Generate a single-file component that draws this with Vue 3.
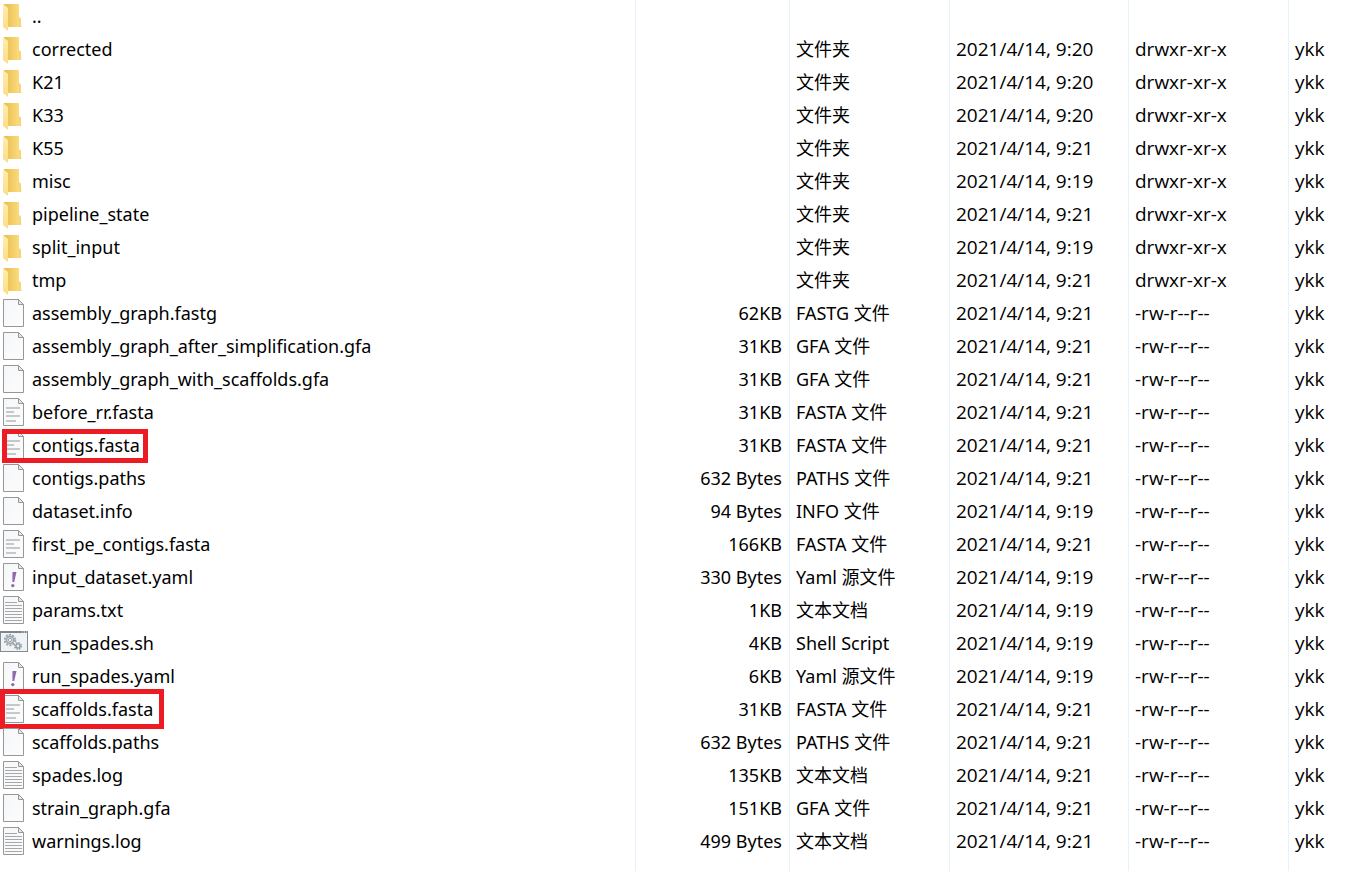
<script setup>
const folder = (name, time) => ({
  name,
  icon: "folder",
  size: "",
  type: time ? "文件夹" : "",
  time: time ? "2021/4/14, " + time : "",
  mode: time ? "drwxr-xr-x" : "",
  owner: time ? "ykk" : "",
});

const file = (name, icon, size, type, time, mark) => ({
  name,
  icon,
  size,
  type,
  time: "2021/4/14, " + time,
  mode: "-rw-r--r--",
  owner: "ykk",
  mark,
});

const rows = [
  folder(".."),
  folder("corrected", "9:20"),
  folder("K21", "9:20"),
  folder("K33", "9:20"),
  folder("K55", "9:21"),
  folder("misc", "9:19"),
  folder("pipeline_state", "9:21"),
  folder("split_input", "9:19"),
  folder("tmp", "9:21"),
  file("assembly_graph.fastg", "blank", "62KB", "FASTG 文件", "9:21"),
  file("assembly_graph_after_simplification.gfa", "blank", "31KB", "GFA 文件", "9:21"),
  file("assembly_graph_with_scaffolds.gfa", "blank", "31KB", "GFA 文件", "9:21"),
  file("before_rr.fasta", "fasta", "31KB", "FASTA 文件", "9:21"),
  file("contigs.fasta", "fasta", "31KB", "FASTA 文件", "9:21", "mark-contigs"),
  file("contigs.paths", "blank", "632 Bytes", "PATHS 文件", "9:21"),
  file("dataset.info", "blank", "94 Bytes", "INFO 文件", "9:19"),
  file("first_pe_contigs.fasta", "fasta", "166KB", "FASTA 文件", "9:21"),
  file("input_dataset.yaml", "yaml", "330 Bytes", "Yaml 源文件", "9:19"),
  file("params.txt", "text", "1KB", "文本文档", "9:19"),
  file("run_spades.sh", "shell", "4KB", "Shell Script", "9:19"),
  file("run_spades.yaml", "yaml", "6KB", "Yaml 源文件", "9:19"),
  file("scaffolds.fasta", "fasta", "31KB", "FASTA 文件", "9:21", "mark-scaffolds"),
  file("scaffolds.paths", "blank", "632 Bytes", "PATHS 文件", "9:21"),
  file("spades.log", "text", "135KB", "文本文档", "9:21"),
  file("strain_graph.gfa", "blank", "151KB", "GFA 文件", "9:21"),
  file("warnings.log", "text", "499 Bytes", "文本文档", "9:21"),
];
</script>

<template>
  <svg class="defs" aria-hidden="true">
    <linearGradient id="folder-back" x1="0" y1="0" x2="1" y2="0">
      <stop offset="0" stop-color="#e8bd4c" />
      <stop offset="0.5" stop-color="#f3cd68" />
      <stop offset="1" stop-color="#fde086" />
    </linearGradient>
    <linearGradient id="folder-front" x1="0" y1="0" x2="0" y2="1">
      <stop offset="0" stop-color="#ffedb0" />
      <stop offset="1" stop-color="#fddd83" />
    </linearGradient>
    <linearGradient id="paper" x1="0" y1="0" x2="1" y2="1">
      <stop offset="0" stop-color="#f5f7f8" />
      <stop offset="1" stop-color="#fcfcfd" />
    </linearGradient>
  </svg>
  <table class="files">
    <colgroup>
      <col />
      <col class="col-size" />
      <col class="col-type" />
      <col class="col-time" />
      <col class="col-mode" />
      <col class="col-owner" />
    </colgroup>
    <tbody>
      <tr v-for="row in rows" :key="row.name">
        <td>
          <div class="name">
            <svg class="icon" width="28" height="33" viewBox="0 0 28 33" aria-hidden="true">
              <g v-if="row.icon === 'folder'">
                <path d="M17 26.5h5l-1-2h-4z" fill="#e4e4e4" />
                <path d="M4 4h15v13l2 2v8H6z" fill="url(#folder-back)" />
                <path d="M19 17l2 2v8h-2z" fill="#f6d477" />
                <path d="M3 4l5 4v23l-5-4z" fill="url(#folder-front)" />
              </g>
              <g v-else-if="row.icon === 'shell'">
                <rect x="0.5" y="4.5" width="27" height="20" fill="#f0f3f5" stroke="#878b8e" />
                <path d="M0 5h28" stroke="#818589" stroke-width="2" />
                <path d="M22 5h1M24 5h1M26 5h1" stroke="#e8eaeb" />
                <circle cx="10" cy="13" r="5.2" fill="none" stroke="#9da7af" stroke-width="2" stroke-dasharray="2 1.27" />
                <circle cx="10" cy="13" r="3.6" fill="#d5e0e6" stroke="#9da7af" stroke-width="1.6" />
                <circle cx="10" cy="13" r="1.6" fill="#f7f9fa" stroke="#9da7af" />
                <circle cx="18" cy="19" r="3.3" fill="none" stroke="#929ca4" stroke-width="1.5" stroke-dasharray="1.5 1.09" />
                <circle cx="18" cy="19" r="2.1" fill="#d0e0ea" stroke="#929ca4" stroke-width="1.4" />
                <circle cx="18" cy="19" r="0.8" fill="#fff" />
              </g>
              <g v-else>
                <path d="M3.5 2.5h15l5 5v22h-20z" fill="url(#paper)" stroke="#979797" />
                <path d="M18.5 2.5v5h5z" fill="#e6e9eb" stroke="#979797" />
                <path v-if="row.icon === 'fasta'" d="M6 12h14M6 16h8M6 20h14M6 25h10" stroke="#c6c8ca" stroke-width="2" />
                <path v-if="row.icon === 'text'" d="M5 8.5h12M5 11.5h17M5 14.5h17M5 17.5h17M5 20.5h17M5 23.5h17M5 26.5h17" stroke="#a5a8aa" />
                <g v-if="row.icon === 'yaml'" fill="#9068b0">
                  <path d="M12.5 11h4l-2.3 10h-1.8z" />
                  <circle cx="12.8" cy="24.6" r="1.7" />
                </g>
              </g>
            </svg>
            <span>{{ row.name }}</span>
            <span v-if="row.mark" class="mark" :class="row.mark"></span>
          </div>
        </td>
        <td class="size">{{ row.size }}</td>
        <td>{{ row.type }}</td>
        <td class="wide">{{ row.time }}</td>
        <td class="wide">{{ row.mode }}</td>
        <td class="wide">{{ row.owner }}</td>
      </tr>
    </tbody>
  </table>
</template>

<style>
body {
  margin: 0;
  background: #fff;
}
</style>

<style scoped>
.defs {
  position: absolute;
  width: 0;
  height: 0;
}
.files {
  width: 100%;
  table-layout: fixed;
  border-collapse: separate;
  border-spacing: 0;
  font-family: "Noto Sans", "Noto Sans CJK SC", sans-serif;
  font-size: 18px;
  line-height: 33px;
  color: #000;
}
.col-size {
  width: 154px;
}
.col-type {
  width: 160px;
}
.col-time {
  width: 179px;
}
.col-mode {
  width: 160px;
}
.col-owner {
  width: 57px;
}
td {
  height: 33px;
  padding: 0 0 0 6px;
  border-right: 1px solid #e5f1fb;
  white-space: nowrap;
  vertical-align: top;
}
td:first-child {
  padding-left: 0;
}
td:last-child {
  border-right: none;
}
tr:last-child td {
  padding-bottom: 13px;
}
.size {
  padding-right: 7px;
  text-align: right;
}
.wide {
  font-family: "Open Sans", "Noto Sans CJK SC", sans-serif;
  font-size: 19px;
}
.name {
  position: relative;
  display: flex;
  gap: 4px;
  height: 33px;
}
.icon {
  flex: none;
}
.mark {
  position: absolute;
  box-sizing: border-box;
  border: 5px solid #ed1c24;
}
.mark-contigs {
  top: 0;
  left: 2px;
  width: 146px;
  height: 34px;
}
.mark-scaffolds {
  top: -4px;
  left: 0;
  width: 164px;
  height: 40px;
}
</style>
